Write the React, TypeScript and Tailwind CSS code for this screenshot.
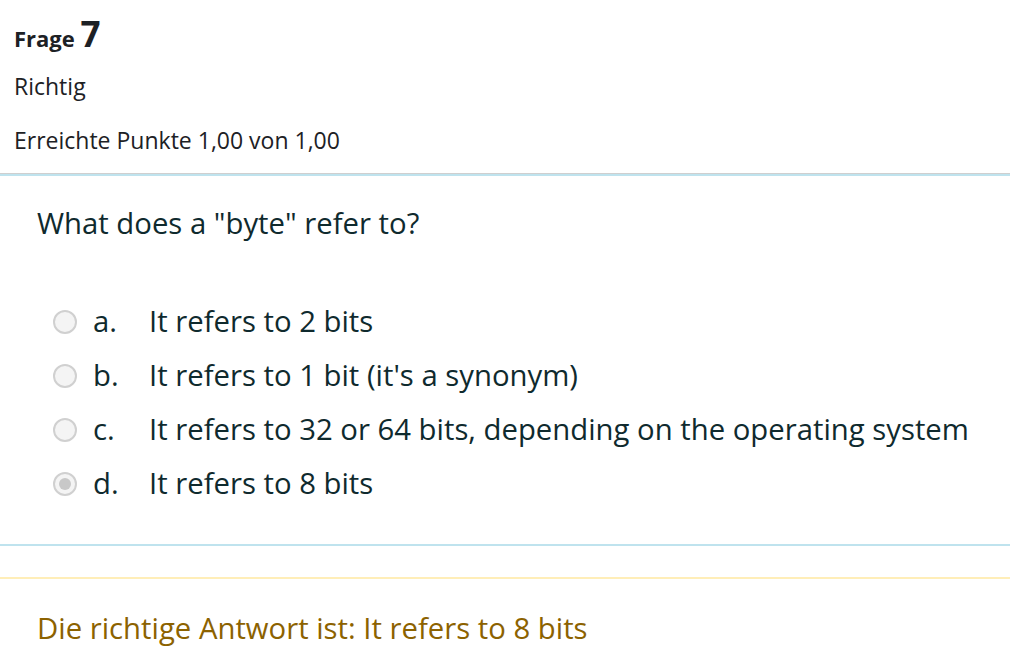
import React from 'react';

const options = [
  { letter: 'a.', text: 'It refers to 2 bits', checked: false },
  { letter: 'b.', text: "It refers to 1 bit (it's a synonym)", checked: false },
  { letter: 'c.', text: 'It refers to 32 or 64 bits, depending on the operating system', checked: false },
  { letter: 'd.', text: 'It refers to 8 bits', checked: true },
];

const Radio: React.FC<{ checked: boolean }> = ({ checked }) => (
  <span className="w-[24px] h-[24px] rounded-full border-2 border-[#d0d0d0] bg-[#f4f4f4] flex items-center justify-center shrink-0">
    {checked && <span className="w-[12px] h-[12px] rounded-full bg-[#c8c8c8]"></span>}
  </span>
);

export default function App() {
  return (
    <div className="w-[1010px] h-[666px] bg-white overflow-hidden font-['Open_Sans',sans-serif]">
      {/* Info block */}
      <div className="px-[14px] pt-[16px] pb-[19px] text-[#1d2125]">
        <h3 className="font-bold text-[22px] leading-[36px]">
          Frage <span className="text-[35px]">7</span>
        </h3>
        <div className="text-[23px] mt-[16px] leading-[28px]">Richtig</div>
        <div className="text-[23px] mt-[26px] leading-[28px]">Erreichte Punkte 1,00 von 1,00</div>
      </div>

      {/* Question */}
      <div className="border-t border-[#cfcfcf]">
        <div className="border-t-2 border-[#bfe3ee] px-[37px] pt-[27px] pb-[40px] text-[#0f2a2e]">
          <p className="text-[29.3px] leading-[40px]">What does a "byte" refer to?</p>
          <div className="mt-[59px] pl-[16px] flex flex-col gap-[14px]">
            {options.map((o) => (
              <div key={o.letter} className="flex items-center h-[40px]">
                <Radio checked={o.checked} />
                <span className="text-[29.3px] ml-[16px] w-[56px]">{o.letter}</span>
                <span className="text-[29.3px]">{o.text}</span>
              </div>
            ))}
          </div>
        </div>
      </div>

      {/* Feedback */}
      <div className="border-t-2 border-[#bfe3ee] pt-[31px]">
        <div className="border-t-2 border-[#ffeeb8] px-[37px] pt-[29px] text-[#8c6200]">
          <p className="text-[29.3px] leading-[40px]">Die richtige Antwort ist: It refers to 8 bits</p>
        </div>
      </div>
    </div>
  );
}
